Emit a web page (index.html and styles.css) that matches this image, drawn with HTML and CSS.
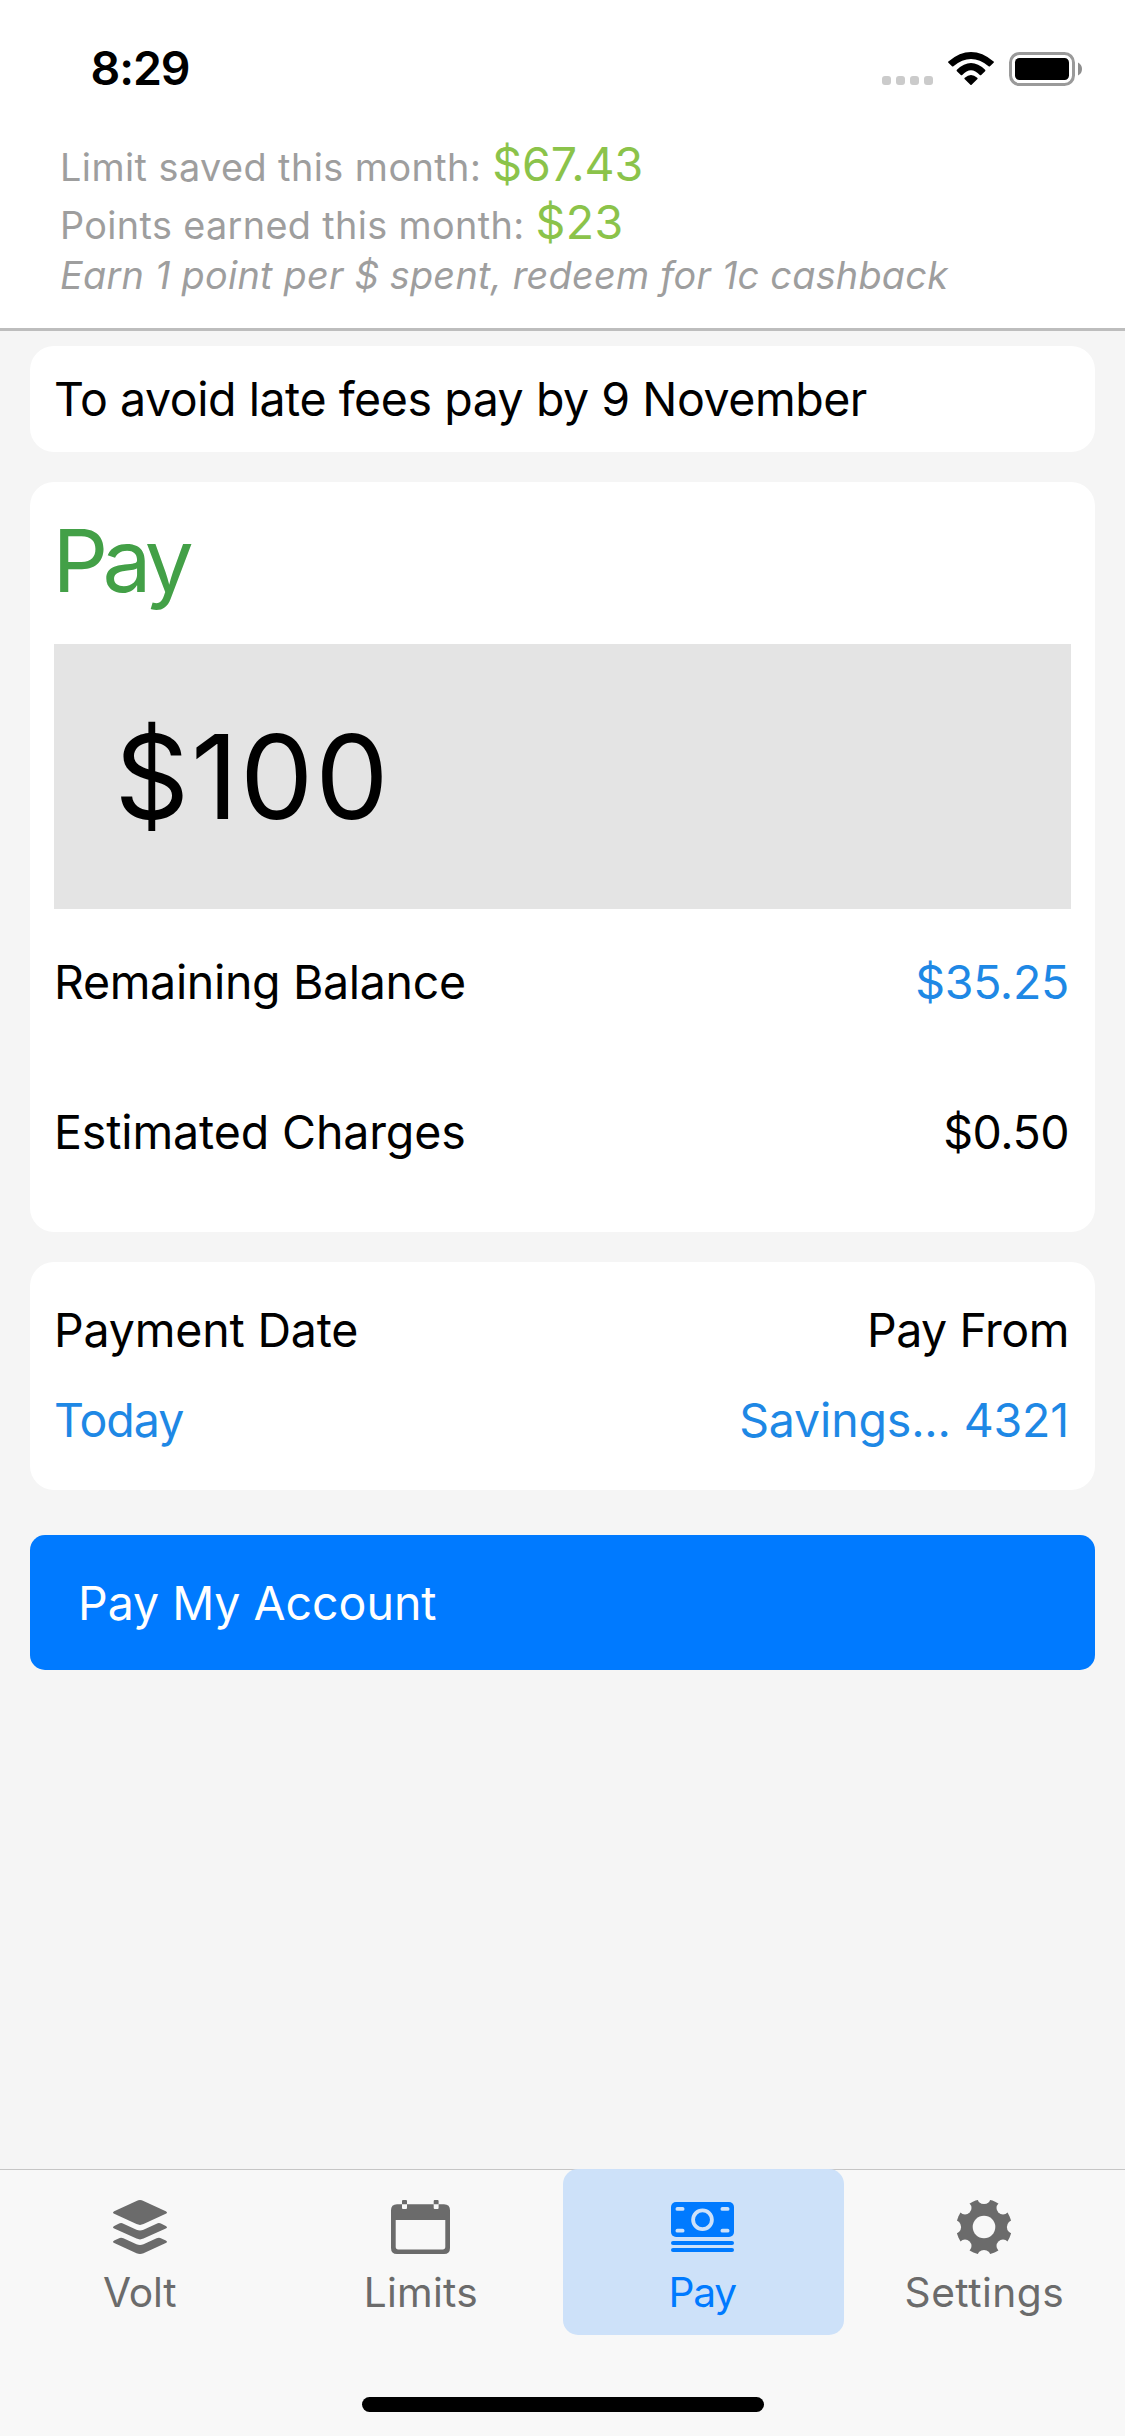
FILE: index.html
```
<!DOCTYPE html>
<html lang="en">
<head>
<meta charset="utf-8">
<title>Pay</title>
<link rel="stylesheet" href="styles.css">
</head>
<body>
<div class="screen">
  <div class="status-bar">
    <span class="time">8:29</span>
    <div class="status-icons">
      <svg class="signal" viewBox="0 0 51 9"><rect width="9" height="9" rx="3"/><rect x="14" width="9" height="9" rx="3"/><rect x="28" width="9" height="9" rx="3"/><rect x="42" width="9" height="9" rx="3"/></svg>
      <svg class="wifi" viewBox="0 0 46 33"><path d="M.4 9.4Q23-9.4 45.6 9.4Q46.4 10 45.6 10.8L42 14.2Q41.3 14.8 40.6 14.2Q23-.2 5.4 14.2Q4.7 14.8 4 14.2L.4 10.8Q-.4 10 .4 9.4Z"/><path d="M8.9 17.8Q23 4.4 37.1 17.8Q37.8 18.5 37.1 19.2L33.2 22.9Q32.5 23.5 31.8 22.9Q23 13.5 14.2 22.9Q13.5 23.5 12.8 22.9L8.9 19.2Q8.2 18.5 8.9 17.8Z"/><path d="M16.8 25.8Q23 20 29.2 25.8Q30 26.5 29.2 27.3L23.6 32.7Q23 33.2 22.4 32.7L16.8 27.3Q16 26.5 16.8 25.8Z"/></svg>
      <svg class="battery" viewBox="0 0 73 34"><rect x="1.5" y="1.5" width="63" height="31" rx="9" fill="none" stroke="#9a9a9a" stroke-width="3"/><rect x="6" y="6" width="54" height="22" rx="4.5"/><path d="M69 10.5Q73 12.5 73 17Q73 21.500 69 23.500Z" fill="#8e8e8e"/></svg>
    </div>
  </div>

  <header class="summary">
    <p class="summary-line">Limit saved this month: <span class="amount">$67.43</span></p>
    <p class="summary-line summary-points">Points earned this month: <span class="amount amount-points">$23</span></p>
    <p class="summary-note">Earn 1 point per $ spent, redeem for 1c cashback</p>
  </header>

  <main class="content">
    <section class="card notice"><p class="notice-text">To avoid late fees pay by 9 November</p></section>

    <section class="card payment">
      <h1 class="title">Pay</h1>
      <div class="amount-field">$100</div>
      <div class="row balance"><span class="label-balance">Remaining Balance</span><span class="link value-balance">$35.25</span></div>
      <div class="row charges"><span class="label-charges">Estimated Charges</span><span class="value-charges">$0.50</span></div>
    </section>

    <section class="card details">
      <div class="row"><span class="label-date">Payment Date</span><span class="label-from">Pay From</span></div>
      <div class="row"><span class="link value-date">Today</span><span class="link value-from">Savings... 4321</span></div>
    </section>

    <button class="pay-button" type="button">Pay My Account</button>
  </main>

  <nav class="tab-bar">
    <div class="tabs">
      <a class="tab">
        <span class="icon-slot"><svg width="54" height="54" viewBox="0 0 54 54" fill="currentColor"><path d="M23.5.9Q27-.7 30.500.9L52.800 11.200Q55.200 12.500 52.800 13.800L30.500 24.100Q27 25.700 23.500 24.100L1.200 13.800Q-1.200 12.500 1.200 11.200Z"/><path d="M1.200 25.900L5.600 23.800Q8 22.400 10.400 23.700L23.500 29.700Q27 31.200 30.500 29.700L43.600 23.700Q46 22.400 48.400 23.800L52.800 25.900Q55.200 27.200 52.800 28.500L30.500 38.600Q27 40.200 23.500 38.600L1.200 28.500Q-1.200 27.200 1.200 25.900Z"/><path d="M1.200 40.500L5.600 38.400Q8 37 10.400 38.300L23.500 44.300Q27 45.800 30.500 44.300L43.600 38.300Q46 37 48.400 38.400L52.800 40.500Q55.200 41.800 52.800 43.100L30.500 53.200Q27 54.800 23.500 53.200L1.200 43.100Q-1.200 41.800 1.200 40.500Z"/></svg></span>
        <span class="tab-label">Volt</span>
      </a>
      <a class="tab">
        <span class="icon-slot"><svg width="59" height="54" viewBox="0 0 59 54" fill="currentColor"><path fill-rule="evenodd" d="M6 4.300H11V8Q11 9 12 9H15Q16 9 16 8V4.300H42.700V8Q42.700 9 43.700 9H46.600Q47.600 9 47.600 8V4.300H53Q59 4.300 59 10.300V48Q59 54 53 54H6Q0 54 0 48V10.300Q0 4.300 6 4.300ZM4.700 20V46.800Q4.700 49.400 7.300 49.400H51.700Q54.300 49.400 54.300 46.800V20Z"/><path d="M11 4.300V1Q11 0 12 0H15Q16 0 16 1V4.300ZM42.700 4.300V1Q42.700 0 43.700 0H46.600Q47.600 0 47.600 1V4.300Z"/></svg></span>
        <span class="tab-label tab-label-limits">Limits</span>
      </a>
      <a class="tab tab-active">
        <span class="icon-slot"><svg width="63" height="50" viewBox="0 0 63 50" fill="currentColor"><rect width="63" height="35" rx="5"/><rect y="39" width="63" height="4" rx="2"/><rect y="46" width="63" height="4" rx="2"/><g fill="#cde1f9"><rect x="4.500" y="5" width="9" height="3.800" rx="1.900"/><rect x="49.500" y="5" width="9" height="3.800" rx="1.900"/><rect x="4.500" y="26.800" width="9" height="3.800" rx="1.900"/><rect x="49.500" y="26.800" width="9" height="3.800" rx="1.900"/></g><circle cx="31.500" cy="17.800" r="9.400" fill="none" stroke="#cde1f9" stroke-width="3.800"/></svg></span>
        <span class="tab-label tab-label-pay">Pay</span>
      </a>
      <a class="tab tab-settings">
        <span class="icon-slot"><svg width="54" height="54" viewBox="-27 -27 54 54" fill="currentColor"><mask id="gear-cut"><rect x="-28" y="-28" width="56" height="56" fill="#fff"/><g fill="#000"><circle r="11.300"/><circle cy="-29.500" r="6.600"/><circle cy="29.500" r="6.600"/><circle cx="-29.500" r="6.600"/><circle cx="29.500" r="6.600"/><circle cx="19" cy="-19" r="6.500"/><circle cx="19" cy="19" r="6.500"/><circle cx="-19" cy="-19" r="6.500"/><circle cx="-19" cy="19" r="6.500"/></g></mask><circle r="27.700" mask="url(#gear-cut)"/></svg></span>
        <span class="tab-label tab-label-settings">Settings</span>
      </a>
    </div>
    <div class="home-indicator"></div>
  </nav>
</div>
</body>
</html>
```
FILE: styles.css
```
* { box-sizing: border-box; }

body {
  margin: 0;
  background: #f5f5f5;
  color: #000;
  font-family: Inter, "Liberation Sans", sans-serif;
  font-size: 46.5px;
  line-height: 56px;
  letter-spacing: -0.33px;
}

p, h1 { margin: 0; font-weight: 400; }

.screen {
  display: flex;
  flex-direction: column;
  width: 1125px;
  height: 2436px;
}

/* Status bar */
.status-bar {
  display: flex;
  justify-content: space-between;
  height: 135px;
  padding: 40px 43px 0 90.6px;
  background: #fff;
}
.time { font-weight: 600; letter-spacing: -1.15px; }
.status-icons { display: flex; align-items: flex-start; padding-top: 12px; }
.signal { width: 51px; height: 9px; margin-top: 24px; fill: #cbcbcb; }
.wifi { width: 46px; height: 33px; margin-left: 15px; }
.battery { width: 73px; height: 34px; margin-left: 15px; }

/* Rewards summary */
.summary {
  height: 196px;
  padding: 0 60px;
  background: #fff;
  border-bottom: 3px solid #bdbdbd;
  color: #9e9e9e;
  font-size: 37.8px;
}
.summary-line { height: 58px; line-height: 58px; letter-spacing: 0.45px; white-space: nowrap; }
.summary-points { letter-spacing: 0.36px; }
.summary-note { line-height: 48px; font-style: italic; letter-spacing: 0.26px; white-space: nowrap; }
.amount { color: #8bc34a; font-size: 46.5px; letter-spacing: -0.1px; }
.amount-points { letter-spacing: 0.4px; }

/* Cards */
.content {
  display: flex;
  flex: 1;
  flex-direction: column;
  gap: 30px;
  padding: 15px 30px;
}
.card { padding: 0 24px; background: #fff; border-radius: 24px; }
.row { display: flex; justify-content: space-between; padding-right: 2px; }
.link { color: #1e88e5; }

.notice { padding-top: 25px; padding-bottom: 25px; }
.notice-text { letter-spacing: -0.45px; }

.payment { padding-top: 26px; padding-bottom: 72px; }
.title {
  margin: 0 0 31px -1.5px;
  color: #43a047;
  font-size: 87.2px;
  line-height: 105px;
  letter-spacing: -5.6px;
}
.amount-field {
  height: 265px;
  padding: 62px 60.5px;
  background: #e4e4e4;
  font-size: 116.3px;
  line-height: 141px;
  letter-spacing: 1.8px;
}
.balance { margin-top: 45px; }
.charges { margin-top: 94px; }
.label-charges { letter-spacing: -0.12px; }
.value-balance { letter-spacing: -0.3px; }
.value-charges { letter-spacing: -0.5px; }

.details { display: flex; flex-direction: column; gap: 34px; padding-top: 40px; padding-bottom: 42px; }
.label-date { letter-spacing: -0.18px; }
.label-from { letter-spacing: -0.46px; }
.value-date { letter-spacing: -1px; }
.value-from { letter-spacing: -0.18px; }

.pay-button {
  height: 135px;
  margin-top: 15px;
  padding: 0 48px;
  border: 0;
  border-radius: 15px;
  background: #007aff;
  color: #fff;
  font: inherit;
  letter-spacing: -0.04px;
  text-align: left;
}

/* Tab bar */
.tab-bar { height: 267px; background: #f8f8f8; box-shadow: inset 0 1px #c6c6c6; }
.tabs { display: grid; grid-template-columns: repeat(4, 1fr); height: 166px; }
.tab {
  display: flex;
  flex-direction: column;
  align-items: center;
  padding: 31px 2px 0 0;
  border-radius: 15px;
  color: #6b6b6b;
}
.tab-active { background: #cde1f9; color: #007aff; }
.tab-settings { padding-right: 0; }
.icon-slot { display: flex; align-items: center; height: 54px; margin-bottom: 14px; }
.tab-label { font-size: 40.7px; line-height: 49px; letter-spacing: -0.18px; }
.tab-label-limits { letter-spacing: 0.27px; }
.tab-label-pay { letter-spacing: -1.3px; }
.tab-label-settings { letter-spacing: 0.47px; }
.home-indicator { width: 402px; height: 15px; margin: 62px 0 0 362px; border-radius: 8px; background: #000; }
```
